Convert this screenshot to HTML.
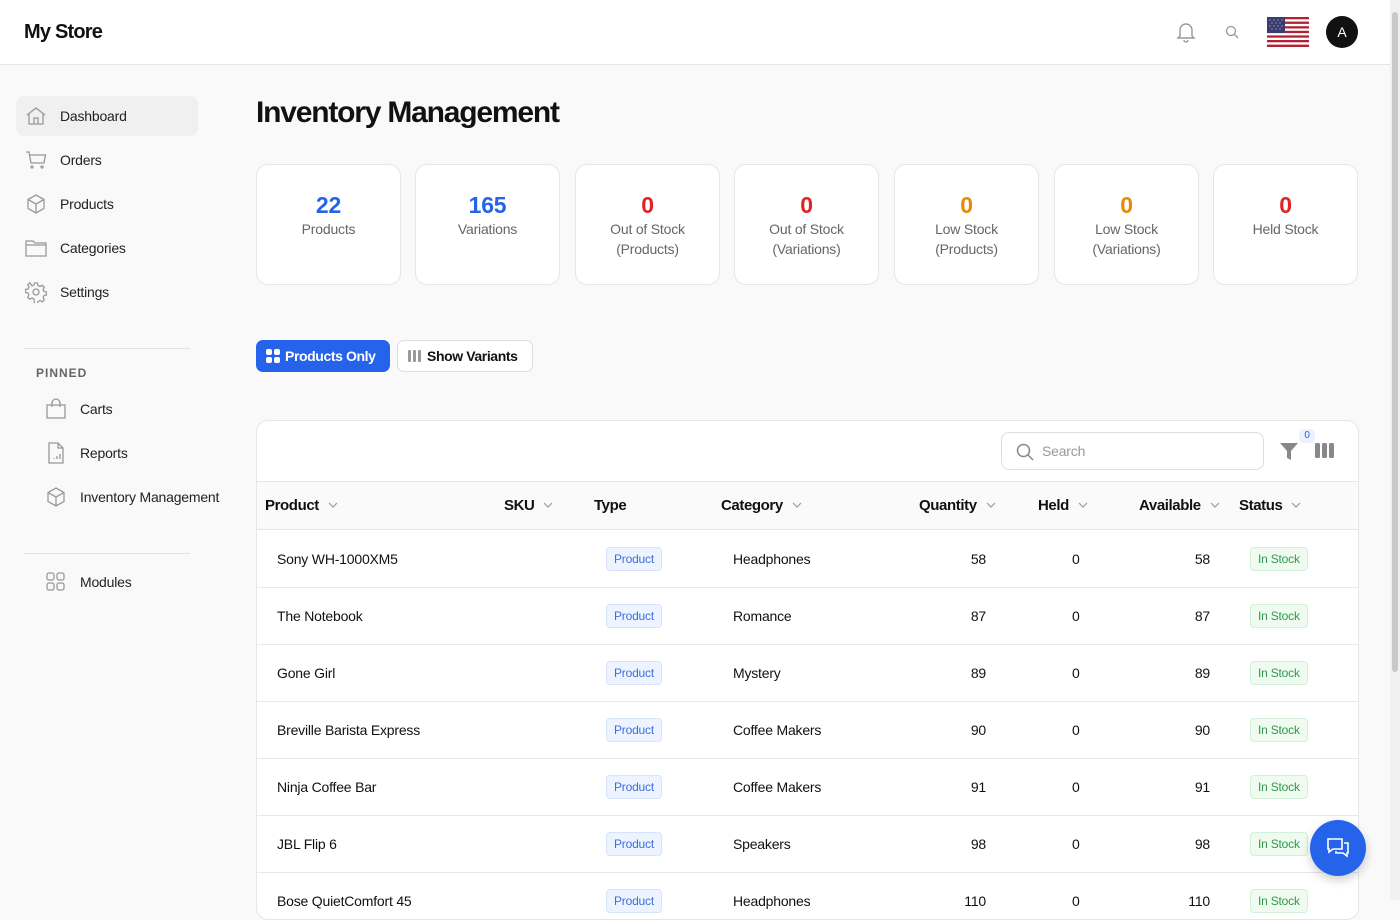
<!DOCTYPE html>
<html><head><meta charset="utf-8"><style>
*{box-sizing:border-box;margin:0;padding:0}
body{width:1400px;height:900px;overflow:hidden;background:#f9f9f9;font-family:"Liberation Sans",sans-serif;color:#111;position:relative;letter-spacing:-0.2px}
.hdr{position:absolute;left:0;top:0;width:1390px;height:65px;background:#fff;border-bottom:1px solid #e5e5e5}
.logo{position:absolute;left:24px;top:21px;font-size:20px;font-weight:bold;letter-spacing:-0.8px}
.sb{position:absolute;right:0;top:0;width:10px;height:900px;background:#f1f1f1}
.sb div{position:absolute;left:2px;top:12px;width:6px;height:660px;background:#c9c9c9;border-radius:3px}
.nav{position:absolute;left:16px;height:40px;width:182px;font-size:14px;color:#222;display:flex;align-items:center;padding-left:44px;border-radius:8px;white-space:nowrap}
.nav svg{position:absolute;left:9px;top:9px}
.nav.act{background:#f0f0f0}
.pn .nav{padding-left:64px}
.pn .nav svg{left:29px}
.line{position:absolute;left:24px;width:166px;height:1px;background:#e2e2e2}
h1{position:absolute;left:256px;top:96px;font-size:30px;font-weight:bold;letter-spacing:-1.2px}
.card{position:absolute;top:164px;width:145px;height:121px;background:#fff;border:1px solid #e6e6e6;border-radius:12px;text-align:center}
.card b{display:block;margin-top:26px;font-size:23px;line-height:28px}
.card span{display:block;font-size:14px;color:#666;line-height:20px;margin-top:0}
.btn{position:absolute;top:340px;height:32px;border-radius:7px;font-size:14px;font-weight:bold;display:flex;align-items:center;gap:5px;padding:0 10px;white-space:nowrap;letter-spacing:-0.4px}
.tbl{position:absolute;left:256px;top:420px;width:1103px;height:500px;background:#fff;border:1px solid #e6e6e6;border-radius:12px;overflow:hidden}
.th{position:absolute;top:60px;left:0;right:0;height:49px;background:#fafafa;border-top:1px solid #e6e6e6;border-bottom:1px solid #e6e6e6}
.th span{position:absolute;top:15px;font-size:15px;font-weight:bold;white-space:nowrap;letter-spacing:-0.4px}
.ch{display:inline-block;width:10px;height:6px;margin-left:9px;vertical-align:middle;position:relative;top:-1px}
.row{position:absolute;left:0;right:0;height:57px;border-bottom:1px solid #e8e8e8;font-size:14px}
.row span{position:absolute;top:20px;white-space:nowrap}
.bd{position:absolute;top:16px!important;height:24px;border-radius:4px;font-size:12px;line-height:22px;padding:0 7px}
.bp{left:349px;background:#eef4ff;border:1px solid #d6e3fb;color:#3b6fe0}
.bs{left:993px;background:#effbf1;border:1px solid #d3f0d8;color:#2e9a4a}
</style></head><body>
<div class="hdr"><div class="logo">My Store</div>
<svg style="position:absolute;left:1176px;top:21px" width="20" height="22" viewBox="0 0 20 22" fill="none" stroke="#999" stroke-width="1.4"><path d="M4 15V9a6 6 0 0 1 12 0v6l2 2H2z"/><path d="M8 19a2 2 0 0 0 4 0"/></svg>
<svg style="position:absolute;left:1225px;top:25px" width="14" height="14" viewBox="0 0 14 14" fill="none" stroke="#999" stroke-width="1.3"><circle cx="6" cy="6" r="4.5"/><path d="M9.5 9.5L13 13"/></svg>
<svg style="position:absolute;left:1267px;top:17px" width="42" height="30" viewBox="0 0 42 30"><rect width="42" height="30" fill="#fff"/><g fill="#b22234"><rect y="0" width="42" height="2.3"/><rect y="4.6" width="42" height="2.3"/><rect y="9.2" width="42" height="2.3"/><rect y="13.8" width="42" height="2.3"/><rect y="18.4" width="42" height="2.3"/><rect y="23" width="42" height="2.3"/><rect y="27.6" width="42" height="2.4"/></g><rect width="18" height="16" fill="#3c3b6e"/><g fill="#fff" opacity=".7"><circle cx="3" cy="3" r=".6"/><circle cx="7" cy="3" r=".6"/><circle cx="11" cy="3" r=".6"/><circle cx="15" cy="3" r=".6"/><circle cx="5" cy="6" r=".6"/><circle cx="9" cy="6" r=".6"/><circle cx="13" cy="6" r=".6"/><circle cx="3" cy="9" r=".6"/><circle cx="7" cy="9" r=".6"/><circle cx="11" cy="9" r=".6"/><circle cx="15" cy="9" r=".6"/><circle cx="5" cy="12" r=".6"/><circle cx="9" cy="12" r=".6"/><circle cx="13" cy="12" r=".6"/></g></svg>
<div style="position:absolute;left:1326px;top:16px;width:32px;height:32px;border-radius:50%;background:#111;color:#fff;font-size:14px;text-align:center;line-height:32px">A</div>
</div>
<div class="sb"><div></div></div>

<div class="nav act" style="top:96px"><svg width="22" height="22" viewBox="0 0 22 22" fill="none" stroke="#999" stroke-width="1.3"><path d="M2 10L11 3l9 7M4 8.5V19h14V8.5M9 19v-6h4v6"/></svg>Dashboard</div>
<div class="nav" style="top:140px"><svg width="22" height="22" viewBox="0 0 22 22" fill="none" stroke="#999" stroke-width="1.3"><path d="M1 3h3l2 11h13l1.5-8H5"/><circle cx="7" cy="18" r="1"/><circle cx="17" cy="18" r="1"/></svg>Orders</div>
<div class="nav" style="top:184px"><svg width="22" height="22" viewBox="0 0 22 22" fill="none" stroke="#999" stroke-width="1.3"><path d="M11 2l8 4.5v9L11 20l-8-4.5v-9zM3 6.5l8 4.5 8-4.5M11 11v9"/></svg>Products</div>
<div class="nav" style="top:228px"><svg width="22" height="22" viewBox="0 0 22 22" fill="none" stroke="#999" stroke-width="1.3"><path d="M1 4h7l2 2h11v13H1zM1 8h20"/></svg>Categories</div>
<div class="nav" style="top:272px"><svg width="22" height="22" viewBox="0 0 22 22" fill="none" stroke="#999" stroke-width="1.3"><circle cx="11" cy="11" r="3"/><path d="M9.5 2h3l.5 2.5 2 1 2.3-1.2 2 2-1.2 2.3 1 2 2.4.4v3l-2.4.5-1 2 1.2 2.3-2 2-2.3-1.2-2 1-.5 2.4h-3L9 18l-2-1-2.3 1.2-2-2L3.9 14l-1-2L.5 11.5v-3L3 8l1-2-1.2-2.3 2-2L7 4.9l2-1z"/></svg>Settings</div>
<div class="line" style="top:348px"></div>
<div style="position:absolute;left:36px;top:366px;font-size:12px;font-weight:bold;color:#666;letter-spacing:1px">PINNED</div>
<div class="pn">
<div class="nav" style="top:389px"><svg width="22" height="22" viewBox="0 0 22 22" fill="none" stroke="#999" stroke-width="1.3"><path d="M2 7h18v13H2zM7 9V5a4 4 0 0 1 8 0v4"/></svg>Carts</div>
<div class="nav" style="top:433px"><svg width="22" height="22" viewBox="0 0 22 22" fill="none" stroke="#999" stroke-width="1.3"><path d="M4 1h9l5 5v15H4zM13 1v5h5M9 17v-1M12 17v-3M15 17v-5"/></svg>Reports</div>
<div class="nav" style="top:477px;width:220px"><svg width="22" height="22" viewBox="0 0 22 22" fill="none" stroke="#999" stroke-width="1.3"><path d="M11 2l8 4.5v9L11 20l-8-4.5v-9zM3 6.5l8 4.5 8-4.5M11 11v9"/></svg>Inventory Management</div>
</div>
<div class="line" style="top:553px"></div>
<div class="pn"><div class="nav" style="top:562px"><svg width="22" height="22" viewBox="0 0 22 22" fill="none" stroke="#999" stroke-width="1.3"><rect x="2" y="2" width="7" height="7" rx="2"/><rect x="12" y="2" width="7" height="7" rx="2"/><rect x="2" y="12" width="7" height="7" rx="2"/><rect x="12" y="12" width="7" height="7" rx="2"/></svg>Modules</div></div>

<h1>Inventory Management</h1>
<div class="card" style="left:256px"><b style="color:#2563eb">22</b><span>Products</span></div>
<div class="card" style="left:415px"><b style="color:#2563eb">165</b><span>Variations</span></div>
<div class="card" style="left:575px"><b style="color:#e02424">0</b><span>Out of Stock<br>(Products)</span></div>
<div class="card" style="left:734px"><b style="color:#e02424">0</b><span>Out of Stock<br>(Variations)</span></div>
<div class="card" style="left:894px"><b style="color:#ea8a00">0</b><span>Low Stock<br>(Products)</span></div>
<div class="card" style="left:1054px"><b style="color:#ea8a00">0</b><span>Low Stock<br>(Variations)</span></div>
<div class="card" style="left:1213px"><b style="color:#e02424">0</b><span>Held Stock</span></div>

<div class="btn" style="left:256px;width:134px;background:#2563eb;color:#fff"><svg width="14" height="14" viewBox="0 0 14 14" fill="#fff"><rect width="6" height="6" rx="2"/><rect x="8" width="6" height="6" rx="2"/><rect y="8" width="6" height="6" rx="2"/><rect x="8" y="8" width="6" height="6" rx="2"/></svg>Products Only</div>
<div class="btn" style="left:397px;width:136px;background:#fff;border:1px solid #ddd"><svg width="14" height="12" viewBox="0 0 14 12" fill="#999"><rect width="3" height="12" rx="1"/><rect x="5" width="3" height="12" rx="1"/><rect x="10" width="3" height="12" rx="1"/></svg>Show Variants</div>

<div class="tbl">
<div style="position:absolute;left:744px;top:11px;width:263px;height:38px;border:1px solid #ddd;border-radius:8px"><svg style="position:absolute;left:14px;top:10px" width="18" height="18" viewBox="0 0 18 18" fill="none" stroke="#888" stroke-width="1.5"><circle cx="7.5" cy="7.5" r="6"/><path d="M12 12l5 5"/></svg><span style="position:absolute;left:40px;top:10px;font-size:14px;color:#999">Search</span></div>
<svg style="position:absolute;left:1023px;top:22px" width="18" height="17" viewBox="0 0 18 17" fill="#888"><path d="M0 0h18l-7 8v9l-4-2V8z"/></svg>
<div style="position:absolute;left:1042px;top:8px;width:16px;height:14px;border-radius:5px;background:#eaf1ff;color:#2563eb;font-size:10px;text-align:center;line-height:14px">0</div>
<svg style="position:absolute;left:1058px;top:22px" width="19" height="15" viewBox="0 0 19 15" fill="#888"><rect width="5" height="15" rx="1.5"/><rect x="7" width="5" height="15" rx="1.5"/><rect x="14" width="5" height="15" rx="1.5"/></svg>
<div class="th">
<span style="left:8px">Product<svg class="ch" viewBox="0 0 10 6" fill="none" stroke="#999" stroke-width="1.2"><path d="M1 1l4 4 4-4"/></svg></span>
<span style="left:247px">SKU<svg class="ch" viewBox="0 0 10 6" fill="none" stroke="#999" stroke-width="1.2"><path d="M1 1l4 4 4-4"/></svg></span>
<span style="left:337px">Type</span>
<span style="left:464px">Category<svg class="ch" viewBox="0 0 10 6" fill="none" stroke="#999" stroke-width="1.2"><path d="M1 1l4 4 4-4"/></svg></span>
<span style="left:662px">Quantity<svg class="ch" viewBox="0 0 10 6" fill="none" stroke="#999" stroke-width="1.2"><path d="M1 1l4 4 4-4"/></svg></span>
<span style="left:781px">Held<svg class="ch" viewBox="0 0 10 6" fill="none" stroke="#999" stroke-width="1.2"><path d="M1 1l4 4 4-4"/></svg></span>
<span style="left:882px">Available<svg class="ch" viewBox="0 0 10 6" fill="none" stroke="#999" stroke-width="1.2"><path d="M1 1l4 4 4-4"/></svg></span>
<span style="left:982px">Status<svg class="ch" viewBox="0 0 10 6" fill="none" stroke="#999" stroke-width="1.2"><path d="M1 1l4 4 4-4"/></svg></span>
</div>
<div style="position:absolute;top:110px;left:0;right:0">
<div class="row" style="top:0"><span style="left:20px">Sony WH-1000XM5</span><span class="bd bp">Product</span><span style="left:476px">Headphones</span><span style="right:372px">58</span><span style="left:815px">0</span><span style="right:148px">58</span><span class="bd bs">In Stock</span></div>
<div class="row" style="top:57px"><span style="left:20px">The Notebook</span><span class="bd bp">Product</span><span style="left:476px">Romance</span><span style="right:372px">87</span><span style="left:815px">0</span><span style="right:148px">87</span><span class="bd bs">In Stock</span></div>
<div class="row" style="top:114px"><span style="left:20px">Gone Girl</span><span class="bd bp">Product</span><span style="left:476px">Mystery</span><span style="right:372px">89</span><span style="left:815px">0</span><span style="right:148px">89</span><span class="bd bs">In Stock</span></div>
<div class="row" style="top:171px"><span style="left:20px">Breville Barista Express</span><span class="bd bp">Product</span><span style="left:476px">Coffee Makers</span><span style="right:372px">90</span><span style="left:815px">0</span><span style="right:148px">90</span><span class="bd bs">In Stock</span></div>
<div class="row" style="top:228px"><span style="left:20px">Ninja Coffee Bar</span><span class="bd bp">Product</span><span style="left:476px">Coffee Makers</span><span style="right:372px">91</span><span style="left:815px">0</span><span style="right:148px">91</span><span class="bd bs">In Stock</span></div>
<div class="row" style="top:285px"><span style="left:20px">JBL Flip 6</span><span class="bd bp">Product</span><span style="left:476px">Speakers</span><span style="right:372px">98</span><span style="left:815px">0</span><span style="right:148px">98</span><span class="bd bs">In Stock</span></div>
<div class="row" style="top:342px"><span style="left:20px">Bose QuietComfort 45</span><span class="bd bp">Product</span><span style="left:476px">Headphones</span><span style="right:372px">110</span><span style="left:815px">0</span><span style="right:148px">110</span><span class="bd bs">In Stock</span></div>
</div>
</div>
<div style="position:absolute;left:1310px;top:820px;width:56px;height:56px;border-radius:50%;background:#2563eb;box-shadow:0 4px 10px rgba(0,0,0,.2)"><svg style="position:absolute;left:16px;top:17px" width="24" height="22" viewBox="0 0 24 22" fill="none" stroke="#fff" stroke-width="1.6"><path d="M2 2h14v10H7l-4 3v-3H2z"/><path d="M18 6h4v10h-1v3l-4-3h-7v-2"/></svg></div>
</body></html>
